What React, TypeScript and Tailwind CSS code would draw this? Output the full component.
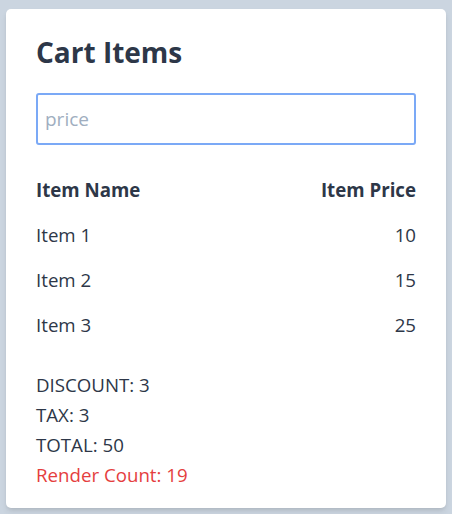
const items = [
  { name: 'Item 1', price: 10 },
  { name: 'Item 2', price: 15 },
  { name: 'Item 3', price: 25 },
];

export default function App() {
  return (
    <div className="min-h-[514px] bg-[#cbd5e0] px-[6px] pt-[9px] pb-[6px] font-['Open_Sans',sans-serif] text-[#2d3748]">
      <div className="rounded-[5px] bg-white px-[30px] pt-[25px] pb-[18px] shadow-md">
        <h1 className="text-[28px] leading-[36px] font-bold">Cart Items</h1>
        <input
          type="text"
          placeholder="price"
          className="mt-[23px] block h-[52px] w-full rounded-[3px] border-2 border-[#7ba9f6] px-[7px] text-[19px] outline-none placeholder:text-[#a0aec0]"
        />
        <table className="mt-[23px] w-full text-[18.7px]">
          <thead>
            <tr className="h-[45px]">
              <th className="text-left font-bold">Item Name</th>
              <th className="text-right font-bold">Item Price</th>
            </tr>
          </thead>
          <tbody>
            {items.map((item) => (
              <tr key={item.name} className="h-[45px]">
                <td className="text-left">{item.name}</td>
                <td className="text-right">{item.price}</td>
              </tr>
            ))}
          </tbody>
        </table>
        <div className="mt-[22px] text-[18.7px] leading-[30px]">
          <p>DISCOUNT: 3</p>
          <p>TAX: 3</p>
          <p>TOTAL: 50</p>
          <p className="text-[#e53e3e]">Render Count: 19</p>
        </div>
      </div>
    </div>
  );
}
